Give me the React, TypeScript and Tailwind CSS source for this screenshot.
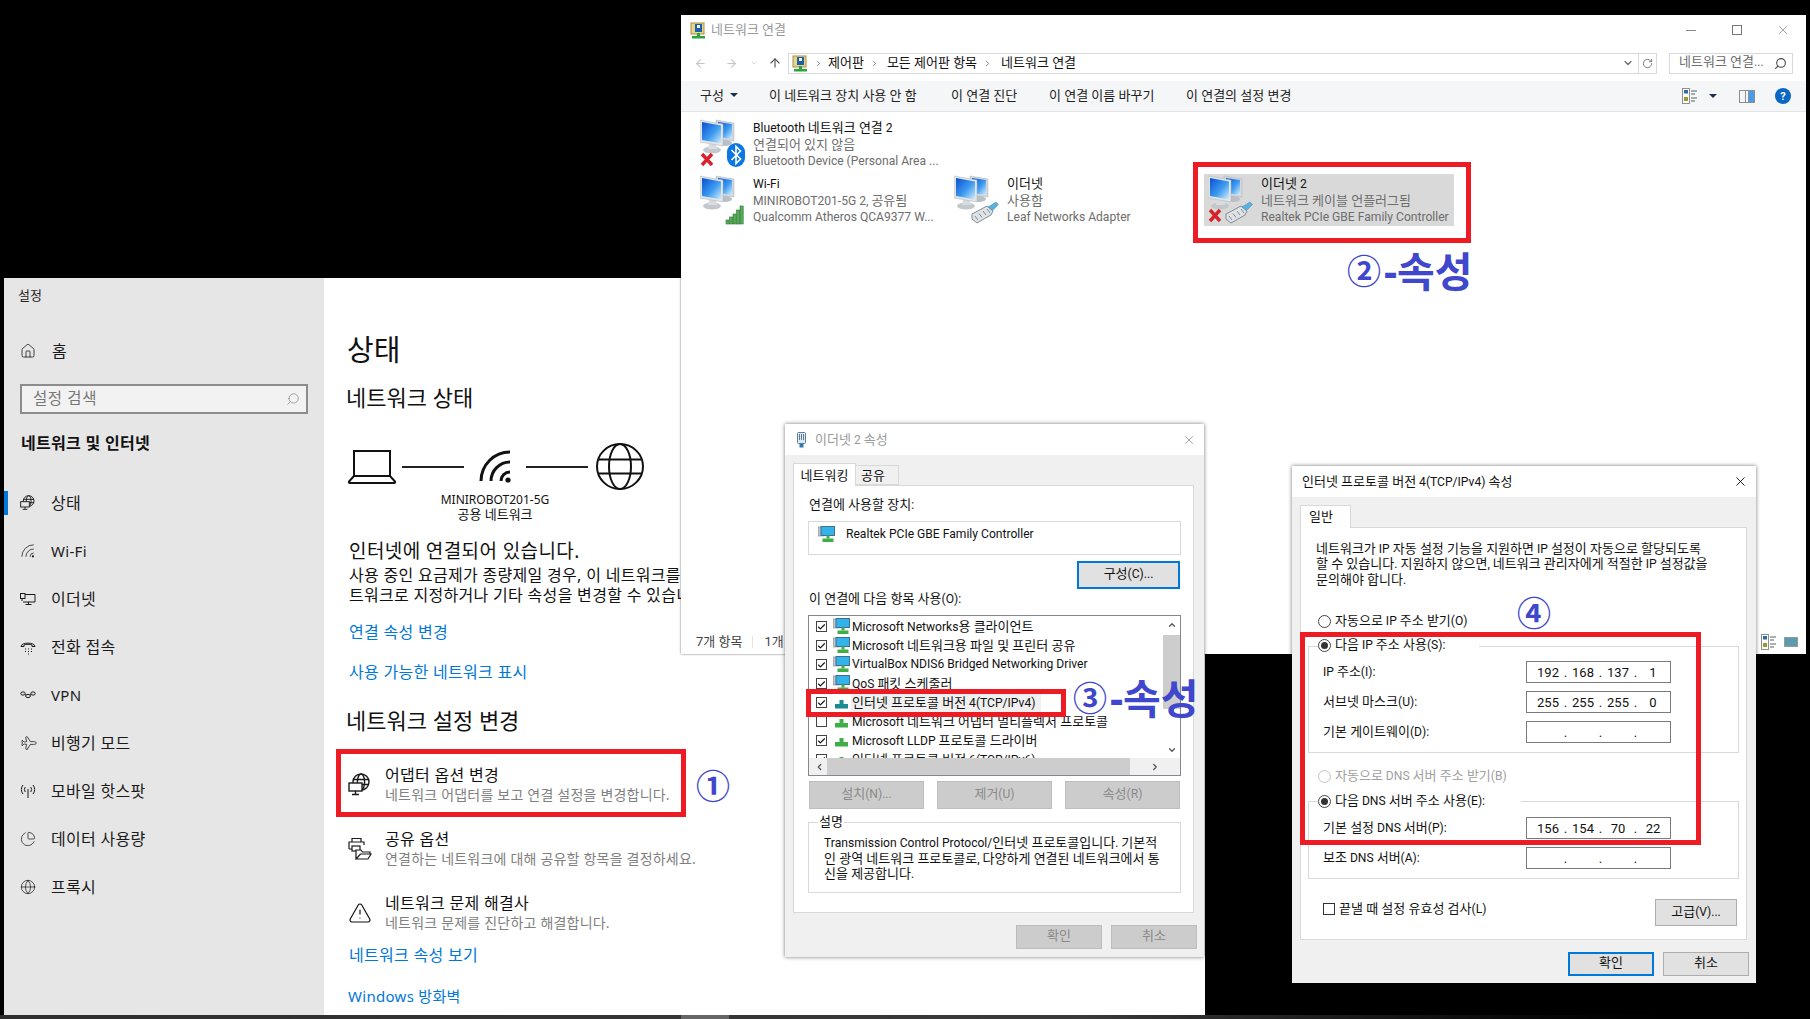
import type { ReactNode } from "react";
import { ArrowLeft, ArrowRight, ArrowUp, Check, ChevronDown, ChevronLeft, ChevronRight, ChevronUp, Globe, Home, PieChart, Plane, RotateCw, Search, TriangleAlert, X } from "lucide-react";

// ─── Helpers ──────────────────────────────────────────────────────────────────

// The classic Windows dialogs set hangul a size above their latin text
function K({ children }: { children: string }) {
  return (
    <>
      {children.split(/([\uac00-\ud7a3]+(?:\s+[\uac00-\ud7a3]+)*)/).map((part, i) =>
        i % 2 ? <span key={i} className="text-[13px]">{part}</span> : part,
      )}
    </>
  );
}

const classicFont = "font-['Roboto','Noto_Sans_CJK_KR',sans-serif] text-[12.1px]";

// ─── Small drawings ───────────────────────────────────────────────────────────

function StatusIcon({ size = 16, bg = "#e6e6e6" }: { size?: number; bg?: string }) {
  return (
    <svg width={size} height={size} viewBox="0 0 24 24" fill="none" stroke="#1a1a1a" strokeWidth="1.4">
      <circle cx="13" cy="9" r="8" />
      <ellipse cx="13" cy="9" rx="3.6" ry="8" />
      <path d="M5 6.5h16M5 11.5h16" />
      <rect x="1" y="10" width="13" height="8" fill={bg} />
      <path d="M7.5 18v3M4 21.5h7" />
    </svg>
  );
}

function WifiArcs({ size = 16, width = 1.4 }: { size?: number; width?: number }) {
  return (
    <svg width={size} height={size} viewBox="0 0 34 34" fill="none" stroke="#111" strokeWidth={width * 2}>
      <path d="M22 31a9 9 0 0 1 9-9M12 31a19 19 0 0 1 19-19M2 31A29 29 0 0 1 31 2" />
      <circle cx="29" cy="30" r="2.6" fill="#111" stroke="none" />
    </svg>
  );
}

function EthernetIcon() {
  return (
    <svg width="16" height="16" viewBox="0 0 16 16" fill="none" stroke="#1a1a1a" strokeWidth="1">
      <path d="M3 3.5h12v7.5H3M8.5 11v2.5M5.5 13.5h6" />
      <rect x="0.5" y="2.5" width="4.5" height="5" fill="#e6e6e6" />
      <path d="M2 7.5v2.5" />
    </svg>
  );
}

function DialIcon() {
  return (
    <svg width="16" height="16" viewBox="0 0 16 16" fill="none" stroke="#1a1a1a" strokeWidth="1">
      <path d="M1 7.5C1 3 15 3 15 7.5H12V6C10 5 6 5 4 6v1.5z" />
      <path d="M5 10h1M8 10h1M11 10h1M5 12.5h1M8 12.5h1M11 12.5h1M8 15h1" />
    </svg>
  );
}

function VpnIcon() {
  return (
    <svg width="16" height="16" viewBox="0 0 16 16" fill="none" stroke="#1a1a1a" strokeWidth="1">
      <ellipse cx="3" cy="6.5" rx="2.2" ry="1.6" />
      <ellipse cx="8" cy="9" rx="2.4" ry="1.6" />
      <ellipse cx="13" cy="6.5" rx="2.2" ry="1.6" />
      <path d="M5 7.2l1 1M10 8.2l1.2-1" />
    </svg>
  );
}

function HotspotIcon() {
  return (
    <svg width="16" height="16" viewBox="0 0 16 16" fill="none" stroke="#1a1a1a" strokeWidth="1">
      <path d="M8 6v9M3 2a7 7 0 0 0 0 9M5.3 4a4 4 0 0 0 0 5M13 2a7 7 0 0 1 0 9M10.7 4a4 4 0 0 1 0 5" />
    </svg>
  );
}

function ShareIcon() {
  return (
    <svg width="24" height="24" viewBox="0 0 24 24" fill="none" stroke="#1a1a1a" strokeWidth="1.2">
      <path d="M4 5V1.5h9V5M1 12V5h15v3M4 12H1M4 5h9" />
      <rect x="4" y="9" width="8" height="5" fill="#fff" />
      <path d="M8 22v-9h5l1.5 2H22v2H12.5L8 22h12l3-5H21" fill="#fff" />
    </svg>
  );
}

function TitleNetIcon() {
  return (
    <svg width="17" height="17" viewBox="0 0 17 17" className="shrink-0">
      <rect x="1" y="1" width="13" height="11" fill="#e8d48a" stroke="#a8913e" />
      <rect x="5" y="2" width="7" height="8" fill="#1d5fa8" />
      <rect x="7" y="3" width="3" height="3" fill="#f4f4f4" />
      <rect x="7" y="11" width="3" height="3" fill="#2aa63c" />
      <rect x="2" y="14" width="13" height="2.5" fill="#2aa63c" />
    </svg>
  );
}

function NetworkMachines({ badge }: { badge: "bluetooth" | "wifi" | "cable" | "cable-off" }) {
  return (
    <svg width="46" height="50" viewBox="0 0 46 50" className="shrink-0">
      <defs>
        <linearGradient id="screenBlue" x1="0" y1="0" x2="1" y2="1">
          <stop offset="0" stopColor="#0b4fd0" />
          <stop offset="0.55" stopColor="#3d9bf0" />
          <stop offset="1" stopColor="#d6effc" />
        </linearGradient>
      </defs>
      <ellipse cx="25" cy="24" rx="7" ry="3" fill="#b9bfc4" />
      <path d="M16 1l18 3v18l-18-2z" fill="#d3d8dd" stroke="#aab2b8" strokeWidth="0.5" />
      <path d="M18 3l14 2v15l-14-2z" fill="url(#screenBlue)" />
      <ellipse cx="12" cy="31" rx="9" ry="3.5" fill="#c3c8cc" />
      <path d="M9 25h7l1 5H8z" fill="#d8dcdf" />
      <path d="M0 1l23 4v22L0 23z" fill="#e3e6e9" stroke="#aab2b8" strokeWidth="0.5" />
      <path d="M2 3l19 3.5v18L2 21z" fill="url(#screenBlue)" />
      {badge === "bluetooth" && (
        <g>
          <rect x="27" y="24" width="18" height="24" rx="9" fill="#0a78e0" />
          <path d="M31.5 31l9 9-4.5 4.5v-17l4.5 4.5-9 9" fill="none" stroke="#fff" strokeWidth="1.6" />
        </g>
      )}
      {badge === "wifi" && (
        <g fill="#57a957" stroke="#2f7a3a" strokeWidth="0.6">
          <rect x="26" y="45" width="3.2" height="4" />
          <rect x="29.5" y="42" width="3.2" height="7" />
          <rect x="33" y="39" width="3.2" height="10" />
          <rect x="36.5" y="35" width="3.2" height="14" />
          <rect x="40" y="31" width="3.2" height="18" />
        </g>
      )}
      {(badge === "cable" || badge === "cable-off") && (
        <g>
          <path d="M18 39l15-8 6 5-2 4-14 8-5-4z" fill="#dfe3e6" stroke="#77828a" strokeWidth="0.9" />
          <path d="M21 41l3 4M25 38.5l3 4M29 36l3 4M33 34l3 4" stroke="#77828a" strokeWidth="0.9" />
          <path d="M34 32l8-5 2.5 2.5-6 6z" fill="#5cb1df" stroke="#3d87b0" strokeWidth="0.5" />
        </g>
      )}
      {(badge === "bluetooth" || badge === "cable-off") && (
        <path d="M2 35l10 11M12 35L2 46" stroke="#d7212b" strokeWidth="3.4" />
      )}
    </svg>
  );
}

function ComponentIcon({ kind }: { kind: "client" | "proto" | "selected" }) {
  if (kind === "client") {
    return (
      <svg width="17" height="17" viewBox="0 0 17 17" className="shrink-0">
        <rect x="0.5" y="1" width="6" height="9" fill="#c2c6ca" stroke="#83898f" strokeWidth="0.6" />
        <rect x="3" y="0.5" width="13.5" height="9" fill="#34b2ea" stroke="#3d6f92" />
        <rect x="8.5" y="9.5" width="3" height="3" fill="#3fae49" />
        <rect x="4.5" y="12.5" width="11" height="3.5" fill="#3fae49" />
      </svg>
    );
  }
  const fill = kind === "selected" ? "#1b8a94" : "#3fae49";
  return (
    <svg width="17" height="17" viewBox="0 0 17 17" className="shrink-0">
      <rect x="6.5" y="6" width="4" height="4" fill={fill} />
      <rect x="2" y="10" width="13" height="4.5" fill={fill} />
    </svg>
  );
}

function ViewIcon() {
  return (
    <svg width="16" height="16" viewBox="0 0 16 16" fill="none">
      <rect x="0.5" y="0.5" width="7" height="15" fill="#fff" stroke="#8a8f94" />
      <rect x="2" y="2" width="4" height="3.5" fill="#2c6aa8" />
      <rect x="2" y="9" width="4" height="4" fill="#9a9a2a" />
      <path d="M9 3h6M9 6h4M9 10h6M9 13h4" stroke="#59616a" />
    </svg>
  );
}

function Caret() {
  return <span className="block h-0 w-0 border-x-[4px] border-t-[4px] border-x-transparent border-t-[#1d2f50]" />;
}

// ─── Settings window ──────────────────────────────────────────────────────────

const sideItems: { label: string; icon: ReactNode; active?: boolean }[] = [
  { label: "상태", icon: <StatusIcon />, active: true },
  { label: "Wi-Fi", icon: <WifiArcs size={14} width={0.9} /> },
  { label: "이더넷", icon: <EthernetIcon /> },
  { label: "전화 접속", icon: <DialIcon /> },
  { label: "VPN", icon: <VpnIcon /> },
  { label: "비행기 모드", icon: <Plane size={16} strokeWidth={1.1} className="rotate-45" /> },
  { label: "모바일 핫스팟", icon: <HotspotIcon /> },
  { label: "데이터 사용량", icon: <PieChart size={16} strokeWidth={1.1} /> },
  { label: "프록시", icon: <Globe size={16} strokeWidth={1.1} /> },
];

function SideRow({ label, icon, active }: { label: string; icon: ReactNode; active?: boolean }) {
  const latin = /^[A-Z]/.test(label);
  return (
    <div className="flex h-[48px] items-center text-[#1a1a1a]">
      <span className={`h-[24px] w-[4px] ${active ? "bg-[#0078d7]" : ""}`} />
      <span className="ml-[12px] flex w-[16px] justify-center">{icon}</span>
      <span className={`ml-[15px] leading-none ${latin ? "text-[15px] tracking-[0.3px]" : "text-[16px] tracking-[0.3px]"}`}>{label}</span>
    </div>
  );
}

function OptionRow({ icon, title, sub }: { icon: ReactNode; title: string; sub: string }) {
  return (
    <div className="flex h-[40px]">
      <div className="flex w-[37px] items-center">{icon}</div>
      <div className="leading-[20px]">
        <p className="text-[16px] tracking-[0.3px] text-[#111]">{title}</p>
        <p className="text-[14px] tracking-[0.2px] text-[#808080]">{sub}</p>
      </div>
    </div>
  );
}

function SettingsWindow() {
  return (
    <section className="absolute left-[4px] top-[278px] flex h-[737px] w-[1201px] overflow-hidden bg-white">
      <aside className="w-[320px] bg-[#e6e6e6]">
        <p className="flex h-[34px] items-center pl-[14px] text-[13px] leading-none text-[#222]">설정</p>
        <div className="mt-[15px] flex h-[48px] items-center pl-[16px] text-[16px] text-[#1a1a1a]">
          <Home size={16} strokeWidth={1.2} />
          <span className="ml-[16px] leading-none">홈</span>
        </div>
        <div className="ml-[16px] mt-[9px] flex h-[30px] w-[288px] items-center justify-between border-2 border-[#8c8c8c] bg-[#f2f2f2] pl-[11px] pr-[6px] text-[15.5px] leading-none tracking-[0.6px] text-[#777]">
          설정 검색
          <Search size={14} strokeWidth={1.1} className="-scale-x-100" />
        </div>
        <p className="flex h-[58px] items-center pl-[17px] text-[16px] font-bold leading-none tracking-[0.3px] text-[#111]">네트워크 및 인터넷</p>
        <nav className="mt-[7px]">
          {sideItems.map((s) => (
            <SideRow key={s.label} {...s} />
          ))}
        </nav>
      </aside>

      <div className="flex-1 whitespace-nowrap pl-[24px] text-[#111]">
        <h1 className="-ml-px mt-[52px] flex h-[38px] items-center text-[29px] font-normal leading-none">상태</h1>
        <h2 className="-ml-[2px] mt-[14px] flex h-[30px] items-center text-[22px] font-normal leading-none">네트워크 상태</h2>

        <div className="mt-[31px] flex h-[47px] items-center">
          <svg width="48" height="34" viewBox="0 0 48 34" fill="none" stroke="#111" strokeWidth="2">
            <path d="M6 26V1h36v25M6 26L1 31.5q-.5 1.5 1 1.5h44q1.5 0 1-1.5L42 26z" />
          </svg>
          <span className="ml-[6px] h-[2px] w-[62px] bg-[#222]" />
          <span className="ml-[15px]"><WifiArcs size={34} width={1.5} /></span>
          <span className="ml-[13px] h-[2px] w-[62px] bg-[#222]" />
          <svg className="ml-[8px]" width="48" height="47" viewBox="0 0 48 47" fill="none" stroke="#111" strokeWidth="2">
            <ellipse cx="24" cy="23.5" rx="23" ry="22.5" />
            <ellipse cx="24" cy="23.5" rx="11" ry="22.5" />
            <path d="M3 16.5h42M3 30.5h42" />
          </svg>
        </div>
        <div className="mt-[2px] w-[294px] text-center text-[12px] leading-[15px]">
          <p>MINIROBOT201-5G</p>
          <p className="text-[13px]">공용 네트워크</p>
        </div>

        <p className="mt-[17px] flex h-[24px] items-center pl-px text-[19px] leading-none tracking-[0.4px]">인터넷에 연결되어 있습니다.</p>
        <div className="mt-[2px] pl-px text-[16px] leading-[20px] tracking-[0.3px]">
          <p>사용 중인 요금제가 종량제일 경우, 이 네트워크를 종량제 네트워크로</p>
          <p>트워크로 지정하거나 기타 속성을 변경할 수 있습니다.</p>
        </div>

        <a className="mt-[13px] flex h-[28px] items-center pl-px text-[16px] leading-none tracking-[0.3px] text-[#0078d7]">연결 속성 변경</a>
        <a className="mt-[12px] flex h-[28px] items-center pl-px text-[16px] leading-none tracking-[0.3px] text-[#0078d7]">사용 가능한 네트워크 표시</a>

        <h2 className="-ml-[2px] mt-[19px] flex h-[30px] items-center text-[22px] font-normal leading-none">네트워크 설정 변경</h2>

        <div className="mt-[30px] flex flex-col gap-[24px]">
          <OptionRow icon={<StatusIcon size={24} bg="#fff" />} title="어댑터 옵션 변경" sub="네트워크 어댑터를 보고 연결 설정을 변경합니다." />
          <OptionRow icon={<ShareIcon />} title="공유 옵션" sub="연결하는 네트워크에 대해 공유할 항목을 결정하세요." />
          <OptionRow icon={<TriangleAlert size={24} strokeWidth={1.2} />} title="네트워크 문제 해결사" sub="네트워크 문제를 진단하고 해결합니다." />
        </div>

        <a className="mt-[8px] flex h-[28px] items-center pl-px text-[16px] leading-none tracking-[0.3px] text-[#0078d7]">네트워크 속성 보기</a>
        <a className="mt-[13px] flex h-[28px] items-center text-[15px] leading-none tracking-[0.3px] text-[#0078d7]">Windows 방화벽</a>
      </div>
    </section>
  );
}

// ─── Network connections window ───────────────────────────────────────────────

function ConnectionItem({
  badge, lines, selected,
}: {
  badge: "bluetooth" | "wifi" | "cable" | "cable-off"; lines: [string, string, string]; selected?: boolean;
}) {
  return (
    <div className={`flex h-[52px] w-[250px] gap-[7px] pl-[4px] pt-px ${selected ? "bg-[#d9d9d9]" : ""}`}>
      <NetworkMachines badge={badge} />
      <div className="mt-px whitespace-nowrap leading-[16px] text-[#6d6d6d]">
        <p className="h-[16.5px] text-[#111]"><K>{lines[0]}</K></p>
        <p className="h-[16.5px]"><K>{lines[1]}</K></p>
        <p className="h-[16.5px]"><K>{lines[2]}</K></p>
      </div>
    </div>
  );
}

function ConnectionsWindow() {
  return (
    <section className={`absolute left-[681px] top-[15px] flex h-[639px] w-[1125px] flex-col bg-white shadow-[0_0_2px_rgba(0,0,0,0.6)] ${classicFont}`}>
      <div className="flex h-[30px] items-center pl-[9px] leading-none text-[#999]">
        <TitleNetIcon />
        <span className="-mt-[2px] ml-[4px] text-[13px]">네트워크 연결</span>
        <div className="ml-auto flex text-[#666]">
          <span className="flex h-[30px] w-[46px] items-center justify-center"><span className="h-px w-[10px] bg-[#888]" /></span>
          <span className="flex h-[30px] w-[46px] items-center justify-center"><span className="h-[10px] w-[10px] border border-[#777]" /></span>
          <span className="flex h-[30px] w-[46px] items-center justify-center"><X size={14} strokeWidth={1} /></span>
        </div>
      </div>

      <div className="flex h-[36px] items-center leading-none text-[#111]">
        <div className="flex w-[107px] items-center text-[#c4c4c4]">
          <ArrowLeft size={13} className="ml-[13px]" />
          <ArrowRight size={13} className="ml-[18px]" />
          <ChevronDown size={8} className="ml-[12px]" />
          <ArrowUp size={14} className="ml-[10px] text-[#555]" />
        </div>
        <div className="flex h-[21px] w-[869px] items-center border border-[#d9d9d9] pl-[3px] text-[13px]">
          <TitleNetIcon />
          <ChevronRight size={9} className="ml-[5px] text-[#666]" />
          <span className="-mt-[2px] ml-[5px]">제어판</span>
          <ChevronRight size={9} className="ml-[6px] text-[#666]" />
          <span className="-mt-[2px] ml-[8px]">모든 제어판 항목</span>
          <ChevronRight size={9} className="ml-[6px] text-[#666]" />
          <span className="-mt-[2px] ml-[9px]">네트워크 연결</span>
          <ChevronDown size={12} strokeWidth={2.4} className="ml-auto text-[#666]" />
          <span className="ml-[4px] flex h-full w-[18px] items-center justify-center border-l border-[#d9d9d9] text-[#666]">
            <RotateCw size={11} strokeWidth={1.8} />
          </span>
        </div>
        <div className="ml-[12px] flex h-[21px] w-[124px] items-center justify-between border border-[#d9d9d9] pl-[9px] pr-[5px] text-[#6d6d6d]">
          <span className="-mt-[2px]"><K>네트워크 연결</K>...</span>
          <Search size={13} strokeWidth={2} className="-scale-x-100 text-[#444]" />
        </div>
      </div>

      <div className="flex h-[31px] items-center border-b border-[#e5e5e5] bg-[#f5f6f7] pl-[19px] text-[13px] leading-none text-[#222]">
        <div className="flex items-center pb-[2px]">
          <span className="flex w-[69px] items-center gap-[6px]">구성 <Caret /></span>
          <span className="w-[182px]">이 네트워크 장치 사용 안 함</span>
          <span className="w-[98px]">이 연결 진단</span>
          <span className="w-[137px]">이 연결 이름 바꾸기</span>
          <span>이 연결의 설정 변경</span>
        </div>
        <div className="ml-auto flex items-center pr-[15px]">
          <ViewIcon />
          <span className="ml-[11px]"><Caret /></span>
          <span className="ml-[22px] flex h-[13px] w-[16px] border border-[#8a8f94]">
            <span className="w-[5px]" />
            <span className="w-[4px] border-x border-[#8a8f94]" />
            <span className="flex-1 bg-[#4a9be8]" />
          </span>
          <span className="ml-[20px] flex h-[16px] w-[16px] items-center justify-center rounded-full bg-[#0a67c4] text-[11px] font-bold text-white">?</span>
        </div>
      </div>

      <div className="grid grid-cols-[254px_254px_254px] gap-y-[4px] pl-[15px] pt-[6px]">
        <ConnectionItem badge="bluetooth" lines={["Bluetooth 네트워크 연결 2", "연결되어 있지 않음", "Bluetooth Device (Personal Area ..."]} />
        <div />
        <div />
        <ConnectionItem badge="wifi" lines={["Wi-Fi", "MINIROBOT201-5G 2, 공유됨", "Qualcomm Atheros QCA9377 W..."]} />
        <ConnectionItem badge="cable" lines={["이더넷", "사용함", "Leaf Networks Adapter"]} />
        <ConnectionItem badge="cable-off" selected lines={["이더넷 2", "네트워크 케이블 언플러그됨", "Realtek PCIe GBE Family Controller"]} />
      </div>

      <div className="mt-auto flex h-[25px] items-center pl-[15px] leading-none text-[#444]">
        <span className="text-[13px]">7개 항목</span>
        <span className="ml-[10px] h-[12px] w-px bg-[#e3e3e3]" />
        <span className="ml-[11px] text-[13px]">1개 항목 선택함</span>
        <span className="ml-auto flex items-center pr-[8px]">
          <ViewIcon />
          <span className="ml-[7px] h-[10px] w-[14px] border border-[#9a9a9a] bg-[#5a9bb0]" />
        </span>
      </div>
    </section>
  );
}

// ─── Dialog pieces ────────────────────────────────────────────────────────────

function WinButton({ label, className = "", disabled, primary }: { label: string; className?: string; disabled?: boolean; primary?: boolean }) {
  const look = disabled
    ? "bg-[#cccccc] border-[#bdbdbd] text-[#8a8a8a]"
    : primary
      ? "bg-[#e1e1e1] border-2 border-[#0078d7] text-[#111]"
      : "bg-[#e1e1e1] border-[#adadad] text-[#111]";
  return (
    <span className={`flex items-center justify-center border leading-none ${look} ${className}`}><span className="-mt-[2px]"><K>{label}</K></span></span>
  );
}

function CheckBox({ checked }: { checked?: boolean }) {
  return (
    <span className="flex h-[11px] w-[11px] shrink-0 items-center justify-center border border-[#444] bg-white">
      {checked && <Check size={10} strokeWidth={3} className="text-[#111]" />}
    </span>
  );
}

function Radio({ checked, disabled }: { checked?: boolean; disabled?: boolean }) {
  return (
    <span className={`flex h-[13px] w-[13px] shrink-0 items-center justify-center rounded-full border bg-white ${disabled ? "border-[#c4c4c4]" : "border-[#444]"}`}>
      {checked && <span className="h-[7px] w-[7px] rounded-full bg-[#333]" />}
    </span>
  );
}

const components: { label: string; kind: "client" | "proto" | "selected"; on: boolean }[] = [
  { label: "Microsoft Networks용 클라이언트", kind: "client", on: true },
  { label: "Microsoft 네트워크용 파일 및 프린터 공유", kind: "client", on: true },
  { label: "VirtualBox NDIS6 Bridged Networking Driver", kind: "client", on: true },
  { label: "QoS 패킷 스케줄러", kind: "client", on: true },
  { label: "인터넷 프로토콜 버전 4(TCP/IPv4)", kind: "selected", on: true },
  { label: "Microsoft 네트워크 어댑터 멀티플렉서 프로토콜", kind: "proto", on: false },
  { label: "Microsoft LLDP 프로토콜 드라이버", kind: "proto", on: true },
  { label: "인터넷 프로토콜 버전 6(TCP/IPv6)", kind: "proto", on: true },
];

function AdapterDialog() {
  return (
    <section className={`absolute left-[785px] top-[424px] h-[533px] w-[419px] bg-[#f0f0f0] leading-none text-[#111] shadow-[0_0_4px_rgba(0,0,0,0.55)] ${classicFont}`}>
      <div className="flex h-[31px] items-center bg-white pl-[12px] text-[#999]">
        <svg width="9" height="16" viewBox="0 0 9 16">
          <rect x="0.5" y="0.5" width="8" height="11" rx="1" fill="#dfe6ec" stroke="#5e7f9c" />
          <path d="M2.5 2v6M4.5 2v6M6.5 2v6" stroke="#5e7f9c" />
          <rect x="2.5" y="11.5" width="4" height="4" fill="#2f78b5" />
        </svg>
        <span className="ml-[9px]"><K>이더넷 2 속성</K></span>
        <X size={14} strokeWidth={1} className="ml-auto mr-[8px] text-[#666]" />
      </div>

      <div className="flex h-[30px] items-end pl-[8px] text-[13px]">
        <span className="z-10 -mb-px flex h-[23px] w-[63px] items-center justify-center border border-b-0 border-[#d9d9d9] bg-white">네트워킹</span>
        <span className="flex h-[20px] w-[43px] items-center border border-l-0 border-[#d9d9d9] pl-[5px]">공유</span>
      </div>

      <div className="ml-[8px] h-[428px] w-[401px] border border-[#d9d9d9] bg-white">
        <p className="mt-[9px] flex h-[20px] items-center pl-[15px]"><span><K>연결에 사용할 장치:</K></span></p>
        <div className="ml-[14px] mt-[6px] flex h-[34px] w-[373px] border border-[#d9d9d9] pl-[9px] pt-[4px]">
          <ComponentIcon kind="client" />
          <span className="ml-[11px] mt-[2px] whitespace-nowrap">Realtek PCIe GBE Family Controller</span>
        </div>
        <WinButton label="구성(C)..." primary className="ml-[283px] mt-[6px] h-[28px] w-[103px]" />
        <p className="flex h-[20px] items-center pl-[15px]"><span><K>이 연결에 다음 항목 사용(O):</K></span></p>

        <div className="ml-[14px] mt-[6px] h-[161px] w-[373px] border border-[#828790] bg-white">
          <div className="flex h-[142px]">
            <div className="flex-1 overflow-hidden pl-[7px] pt-px">
              {components.map((c) => (
                <div key={c.label} className="flex h-[19px] items-center whitespace-nowrap">
                  <CheckBox checked={c.on} />
                  <span className="ml-[6px]"><ComponentIcon kind={c.kind} /></span>
                  <span className={`ml-px flex h-[18px] items-center pl-px pr-[6px] ${c.kind === "selected" ? "bg-[#f0f0f0]" : ""}`}>
                    <span><K>{c.label}</K></span>
                  </span>
                </div>
              ))}
            </div>
            <div className="flex w-[17px] flex-col items-center bg-white pt-[4px] text-[#555]">
              <ChevronUp size={10} strokeWidth={3} />
              <span className="mt-[5px] h-[74px] w-full bg-[#cdcdcd]" />
              <ChevronDown size={10} strokeWidth={3} className="mt-auto mb-[3px]" />
            </div>
          </div>
          <div className="flex h-[17px] items-center bg-[#f0f0f0] text-[#555]">
            <ChevronLeft size={10} strokeWidth={3} className="ml-[3px] w-[15px]" />
            <span className="h-full w-[303px] bg-[#cdcdcd]" />
            <ChevronRight size={10} strokeWidth={3} className="ml-[20px]" />
          </div>
        </div>

        <div className="ml-[15px] mt-[5px] flex gap-[13px]">
          <WinButton label="설치(N)..." disabled className="h-[28px] w-[115px]" />
          <WinButton label="제거(U)" disabled className="h-[28px] w-[115px]" />
          <WinButton label="속성(R)" disabled className="h-[28px] w-[115px]" />
        </div>

        <div className="relative ml-[14px] mt-[13px] h-[71px] w-[373px] whitespace-nowrap border border-[#d9d9d9] pl-[15px] pt-[12px] leading-[15px]">
          <span className="absolute -top-[8px] left-[9px] bg-white px-[1px] text-[13px] leading-[14px]">설명</span>
          <p className="h-[15.5px]"><K>Transmission Control Protocol/인터넷 프로토콜입니다. 기본적</K></p>
          <p className="h-[15.5px]"><K>인 광역 네트워크 프로토콜로, 다양하게 연결된 네트워크에서 통</K></p>
          <p className="h-[15.5px]"><K>신을 제공합니다.</K></p>
        </div>
      </div>

      <div className="mt-[12px] flex justify-end gap-[9px] pr-[7px]">
        <WinButton label="확인" disabled className="h-[24px] w-[86px]" />
        <WinButton label="취소" disabled className="h-[24px] w-[86px]" />
      </div>
    </section>
  );
}

function IpField({ label, parts }: { label: string; parts?: [string, string, string, string] }) {
  const cells = parts ?? ["", "", "", ""];
  return (
    <div className="flex h-[22px] items-center pl-[14px]">
      <span className="w-[203px] whitespace-nowrap"><K>{label}</K></span>
      <div className="flex h-[22px] w-[145px] items-center border border-[#7a7a7a] pl-[8px] text-[13px]">
        {cells.map((p, i) => (
          <span key={i} className="flex">
            <span className="w-[26px] text-center">{p}</span>
            {i < 3 && <span className="w-[9px] text-center">.</span>}
          </span>
        ))}
      </div>
    </div>
  );
}

function GroupLegend({ label, className }: { label: string; className: string }) {
  return (
    <div className={`absolute left-[9px] flex h-[20px] items-center bg-white ${className}`}>
      <Radio checked />
      <span className="ml-[4px] whitespace-nowrap"><K>{label}</K></span>
    </div>
  );
}

function IpDialog() {
  return (
    <section className={`absolute left-[1292px] top-[466px] h-[517px] w-[464px] bg-[#f0f0f0] leading-none text-[#111] shadow-[0_0_4px_rgba(0,0,0,0.55)] ${classicFont}`}>
      <div className="flex h-[31px] items-center bg-white pl-[10px]">
        <span><K>인터넷 프로토콜 버전 4(TCP/IPv4) 속성</K></span>
        <X size={15} strokeWidth={1.5} className="ml-auto mr-[8px]" />
      </div>
      <div className="flex h-[30px] items-end pl-[8px] text-[13px]">
        <span className="z-10 -mb-px flex h-[23px] w-[51px] items-center border border-b-0 border-[#d9d9d9] bg-white pb-[2px] pl-[8px]">일반</span>
      </div>

      <div className="ml-[8px] h-[413px] w-[447px] border border-[#d9d9d9] bg-white">
        <div className="h-[60px] whitespace-nowrap pl-[15px] pt-[13px] leading-[15px]">
          <p className="h-[15.25px]"><K>네트워크가 IP 자동 설정 기능을 지원하면 IP 설정이 자동으로 할당되도록</K></p>
          <p className="h-[15.25px]"><K>할 수 있습니다. 지원하지 않으면, 네트워크 관리자에게 적절한 IP 설정값을</K></p>
          <p className="h-[15.25px]"><K>문의해야 합니다.</K></p>
        </div>

        <div className="ml-[17px] mt-[23px] flex h-[20px] items-center">
          <Radio />
          <span className="ml-[4px]"><K>자동으로 IP 주소 받기(O)</K></span>
        </div>

        <div className="relative ml-[7px] mt-[15px] flex h-[107px] w-[431px] flex-col gap-[8px] border border-[#d9d9d9] pt-[14px]">
          <GroupLegend label="다음 IP 주소 사용(S):" className="-top-[12px] w-[161px]" />
          <IpField label="IP 주소(I):" parts={["192", "168", "137", "1"]} />
          <IpField label="서브넷 마스크(U):" parts={["255", "255", "255", "0"]} />
          <IpField label="기본 게이트웨이(D):" />
        </div>

        <div className="ml-[17px] mt-[13px] flex h-[20px] items-center text-[#a0a0a0]">
          <Radio disabled />
          <span className="ml-[4px]"><K>자동으로 DNS 서버 주소 받기(B)</K></span>
        </div>

        <div className="relative ml-[7px] mt-[15px] flex h-[78px] w-[431px] flex-col gap-[8px] border border-[#d9d9d9] pt-[15px]">
          <GroupLegend label="다음 DNS 서버 주소 사용(E):" className="-top-[11px] w-[203px]" />
          <IpField label="기본 설정 DNS 서버(P):" parts={["156", "154", "70", "22"]} />
          <IpField label="보조 DNS 서버(A):" />
        </div>

        <div className="mt-[20px] flex h-[27px] items-start pl-[22px] pr-[9px]">
          <div className="flex h-[20px] items-center">
            <span className="h-[12px] w-[12px] border border-[#333]" />
            <span className="ml-[4px]"><K>끝낼 때 설정 유효성 검사(L)</K></span>
          </div>
          <WinButton label="고급(V)..." className="ml-auto h-[27px] w-[82px]" />
        </div>
      </div>

      <div className="mt-[12px] flex justify-end gap-[9px] pr-[7px]">
        <WinButton label="확인" primary className="h-[24px] w-[86px]" />
        <WinButton label="취소" className="h-[24px] w-[86px]" />
      </div>
    </section>
  );
}

// ─── Page ─────────────────────────────────────────────────────────────────────

const redBoxes = [
  "left-[336px] top-[749px] h-[68px] w-[350px]",
  "left-[1193px] top-[162px] h-[81px] w-[278px]",
  "left-[806px] top-[689px] h-[28px] w-[260px]",
  "left-[1300px] top-[632px] h-[213px] w-[401px]",
];

const notes = [
  { mark: "①", tail: "", pos: "left-[696px] top-[763px]" },
  { mark: "②", tail: "-속성", pos: "left-[1347px] top-[248px]" },
  { mark: "③", tail: "-속성", pos: "left-[1073px] top-[675px]" },
  { mark: "④", tail: "", pos: "left-[1517px] top-[590px]" },
];

export default function App() {
  return (
    <div className="relative h-[1019px] w-[1810px] overflow-hidden bg-black font-['Noto_Sans','Noto_Sans_CJK_KR',sans-serif]">
      <SettingsWindow />
      <ConnectionsWindow />
      <AdapterDialog />
      <IpDialog />

      {redBoxes.map((pos) => (
        <div key={pos} className={`absolute border-[5px] border-[#ed1c24] ${pos}`} />
      ))}
      {notes.map((n) => (
        <span key={n.mark} className={`absolute flex h-[46px] items-center font-bold leading-none text-[#3f48cc] ${n.pos}`}>
          <span className="text-[34px]">{n.mark}</span>
          {n.tail && <span className="ml-[3px] text-[41px]">{n.tail}</span>}
        </span>
      ))}

      <div className="absolute bottom-0 left-0 flex h-[4px] w-full bg-linear-to-r from-[#2e2e2e] via-[#3a3a3a] via-60% to-black">
        <span className="ml-[681px] h-full w-[48px] bg-[#666]" />
      </div>
    </div>
  );
}
